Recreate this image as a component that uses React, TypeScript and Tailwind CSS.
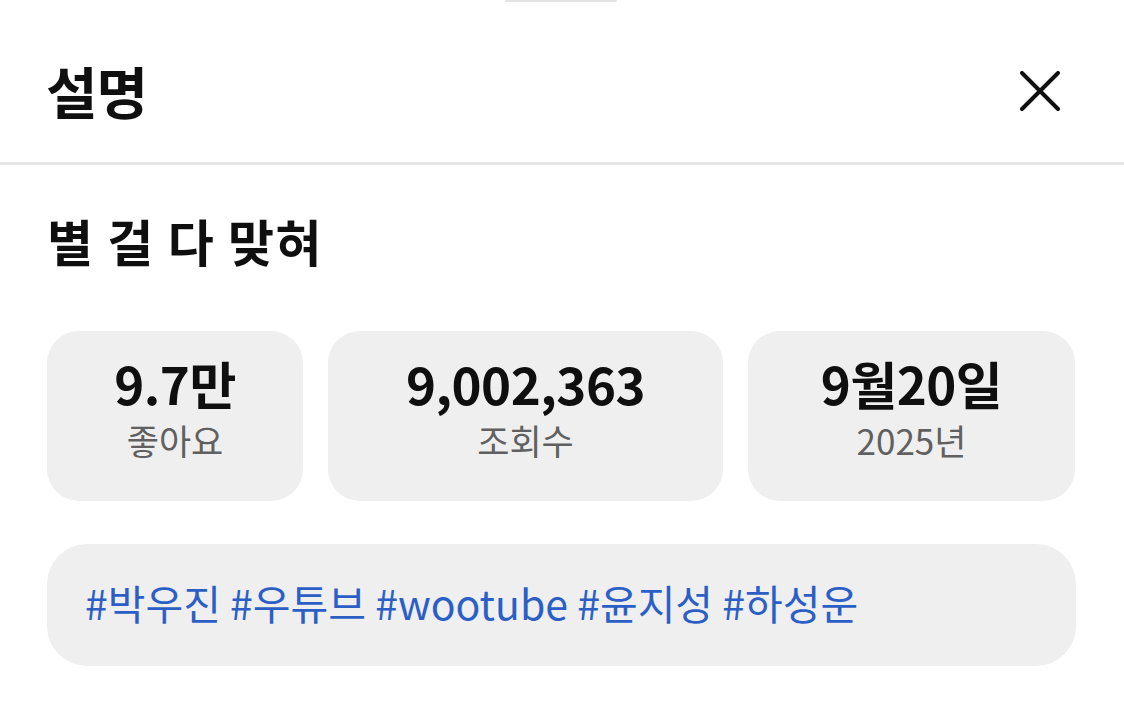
const stats = [
  { value: "9.7만", label: "좋아요", width: "w-[256px]" },
  { value: "9,002,363", label: "조회수", width: "w-[395px]" },
  { value: "9월20일", label: "2025년", width: "w-[327px]" },
];

const tags = ["#박우진", "#우튜브", "#wootube", "#윤지성", "#하성운"];

export default function App() {
  return (
    <div className="relative h-[714px] w-[1124px] overflow-hidden bg-white font-['Noto_Sans_CJK_KR',sans-serif] text-[#0f0f0f]">
      <div className="absolute left-[505px] top-0 h-[2px] w-[112px] rounded-full bg-[#e3e3e3]" />

      <header className="flex h-[165px] items-center justify-between border-b-[3px] border-[#e5e5e5] pl-[46px] pr-[64px] pt-[18px]">
        <h1 className="text-[56px] font-bold leading-none tracking-[-0.02em]">설명</h1>
        <button aria-label="닫기" className="mt-[2px] flex h-10 w-10 items-center justify-center">
          <svg width="40" height="40" viewBox="0 0 40 40" fill="none">
            <path d="M2 2L38 38M38 2L2 38" stroke="#0f0f0f" strokeWidth="4" strokeLinecap="round" />
          </svg>
        </button>
      </header>

      <div className="px-[47px]">
        <h2 className="mt-[50px] text-[50px] font-bold leading-none tracking-[0.03em]">별 걸 다 맞혀</h2>

        <div className="mt-[66px] flex gap-[25px]">
          {stats.map((s) => (
            <div
              key={s.label}
              className={`${s.width} flex h-[170px] flex-col items-center rounded-[32px] bg-[#efefef] pt-[26px]`}
            >
              <div className="text-[51px] font-bold leading-[52px] tracking-[-0.01em]">{s.value}</div>
              <div className="mt-[11px] text-[35px] leading-[40px] text-[#606060]">{s.label}</div>
            </div>
          ))}
        </div>

        <div className="mt-[43px] flex h-[122px] w-[1029px] items-start rounded-[40px] bg-[#efefef] px-[38px] pt-[32px]">
          <p className="text-[41px] leading-[52px] text-[#2c5fc6]">
            {tags.join(" ")}
          </p>
        </div>
      </div>
    </div>
  );
}
